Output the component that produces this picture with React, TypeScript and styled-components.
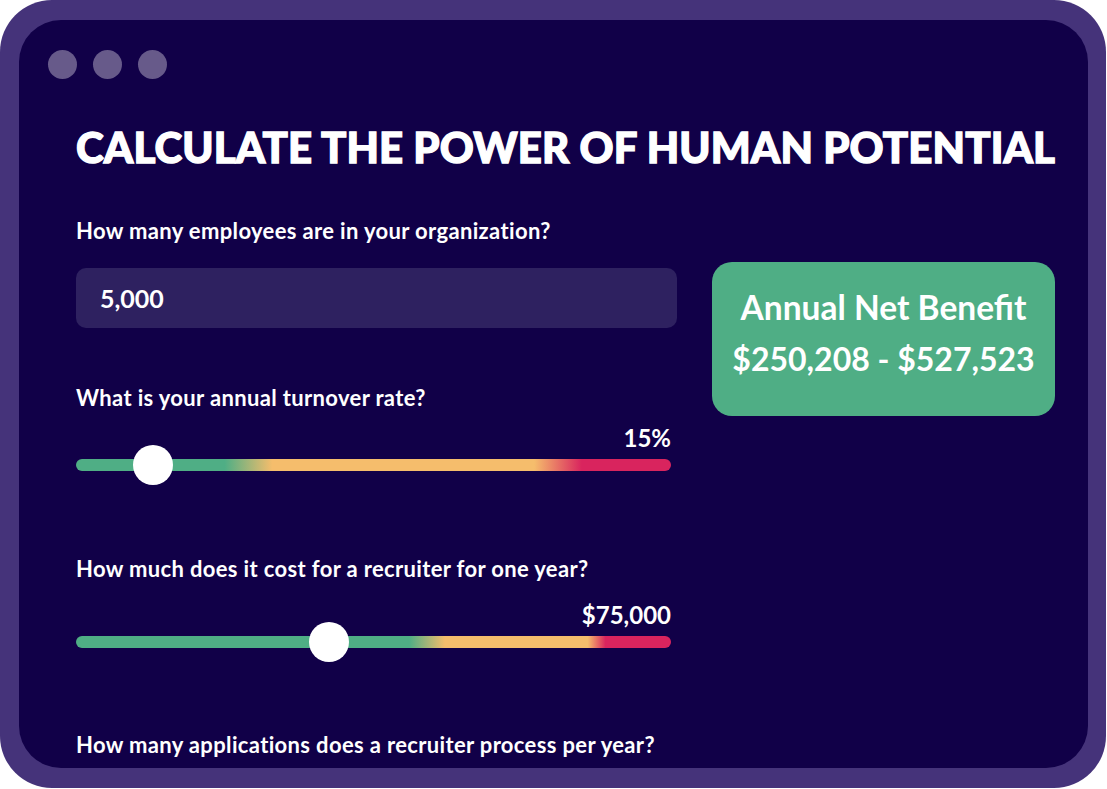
import React from "react";
import styled, { createGlobalStyle } from "styled-components";

const Global = createGlobalStyle`
  html, body { margin: 0; padding: 0; background: #ffffff; }
  body { font-family: Lato, "Open Sans", sans-serif; }
  * { box-sizing: border-box; }
`;

const Frame = styled.div`
  width: 1106px;
  height: 788px;
  background: #45337a;
  border-radius: 52px;
  padding: 20px 18px 20px 19px;
`;

const Screen = styled.div`
  width: 100%;
  height: 100%;
  background: #110048;
  border-radius: 42px;
  overflow: hidden;
  padding: 30px 0 0 29px;
  display: flex;
  flex-direction: column;
`;

const Dots = styled.div`
  display: flex;
  gap: 16px;
`;

const Dot = styled.span`
  width: 29px;
  height: 29px;
  border-radius: 50%;
  background: #675a8a;
`;

const Content = styled.div`
  padding-left: 28px;
  display: flex;
  flex-direction: column;
`;

const Title = styled.h1`
  margin: 43px 0 0 0;
  font-family: Lato, sans-serif;
  font-weight: 900;
  font-size: 42px;
  line-height: 50px;
  color: #ffffff;
  -webkit-text-stroke: 1.3px #ffffff;
  letter-spacing: 0.12px;
  white-space: nowrap;
`;

const Columns = styled.div`
  display: grid;
  grid-template-columns: 601px 343px;
  column-gap: 35px;
  margin-top: 47px;
`;

const Left = styled.div`
  display: flex;
  flex-direction: column;
`;

const Label = styled.div<{ $top: number }>`
  margin-top: ${(p) => p.$top}px;
  font-family: Lato, sans-serif;
  font-weight: 700;
  font-size: 22px;
  line-height: 24px;
  letter-spacing: 0.35px;
  color: #ffffff;
  white-space: nowrap;
`;

const Input = styled.div`
  margin-top: 25px;
  height: 60px;
  border-radius: 10px;
  background: #2e2160;
  display: flex;
  align-items: center;
  padding-left: 24px;
  font-family: Lato, sans-serif;
  font-weight: 700;
  font-size: 25px;
  color: #ffffff;
`;

const SliderBlock = styled.div<{ $top: number }>`
  margin-top: ${(p) => p.$top}px;
  width: 595px;
  display: flex;
  flex-direction: column;
`;

const Value = styled.div`
  align-self: flex-end;
  font-family: Lato, sans-serif;
  font-weight: 700;
  font-size: 24px;
  line-height: 26px;
  color: #ffffff;
`;

const Track = styled.div<{ $stops: string }>`
  position: relative;
  margin-top: 8px;
  height: 12px;
  border-radius: 6px;
  background: linear-gradient(90deg, ${(p) => p.$stops});
`;

const Thumb = styled.span`
  position: absolute;
  top: 50%;
  width: 40px;
  height: 40px;
  margin-left: -20px;
  margin-top: -20px;
  border-radius: 50%;
  background: #ffffff;
`;

const Card = styled.div`
  margin-top: 43px;
  align-self: start;
  height: 154px;
  border-radius: 20px;
  background: #4fae85;
  color: #ffffff;
  display: flex;
  flex-direction: column;
  align-items: center;
  padding-top: 20px;
  font-family: Lato, sans-serif;
  font-weight: 700;
  line-height: 51px;
`;

const CardTitle = styled.div`
  font-size: 33.5px;
`;

const CardAmount = styled.div`
  font-size: 32px;
`;

const G = "#4fae85";
const O = "#f5bd6c";
const R = "#d9245e";

export default function App() {
  return (
    <>
      <Global />
      <Frame>
        <Screen>
          <Dots>
            <Dot />
            <Dot />
            <Dot />
          </Dots>
          <Content>
            <Title>CALCULATE THE POWER OF HUMAN POTENTIAL</Title>
            <Columns>
              <Left>
                <Label $top={0}>How many employees are in your organization?</Label>
                <Input>5,000</Input>
                <Label $top={58}>What is your annual turnover rate?</Label>
                <SliderBlock $top={15}>
                  <Value>15%</Value>
                  <Track $stops={`${G} 0%, ${G} 25%, ${O} 33%, ${O} 77%, ${R} 85%, ${R} 100%`}>
                    <Thumb style={{ left: "13%" }} />
                  </Track>
                </SliderBlock>
                <Label $top={86}>How much does it cost for a recruiter for one year?</Label>
                <SliderBlock $top={21}>
                  <Value>$75,000</Value>
                  <Track $stops={`${G} 0%, ${G} 56%, ${O} 62%, ${O} 86%, ${R} 89%, ${R} 100%`}>
                    <Thumb style={{ left: "42.6%" }} />
                  </Track>
                </SliderBlock>
                <Label $top={85}>How many applications does a recruiter process per year?</Label>
              </Left>
              <Card>
                <CardTitle>Annual Net Benefit</CardTitle>
                <CardAmount>$250,208 - $527,523</CardAmount>
              </Card>
            </Columns>
          </Content>
        </Screen>
      </Frame>
    </>
  );
}
